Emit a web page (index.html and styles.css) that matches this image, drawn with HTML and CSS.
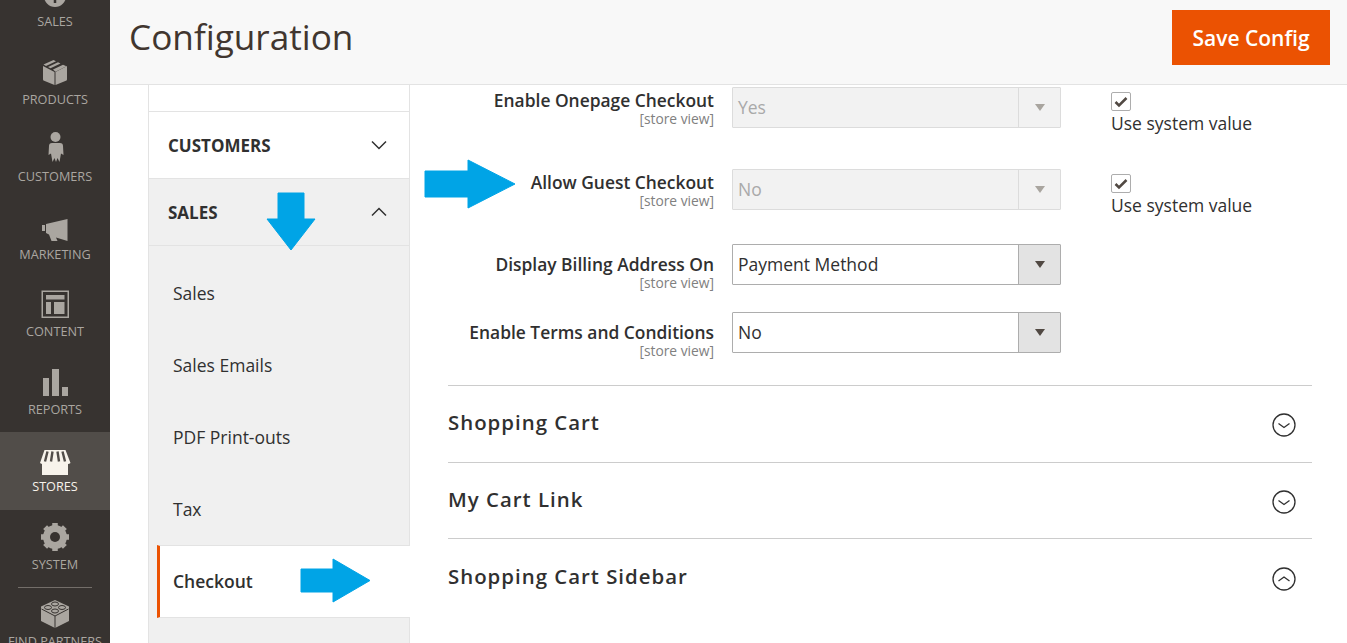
FILE: index.html
```html
<!DOCTYPE html>
<html lang="en">
<head>
    <meta charset="UTF-8">
    <meta name="viewport" content="width=device-width, initial-scale=1.0">
    <title>Configuration</title>
    <link rel="stylesheet" href="styles.css">
</head>
<body>
    <!-- Admin menu -->
    <nav class="admin-menu">
        <a class="menu-item" href="#">
            <svg class="menu-icon" viewBox="0 0 36 36"><circle cx="18" cy="21" r="11" fill="#aaa6a0"/><path d="M18 14v14" stroke="#373330" stroke-width="2.5"/></svg>
            <span>Sales</span>
        </a>
        <a class="menu-item" href="#">
            <svg class="menu-icon" viewBox="0 0 36 36"><path d="M6 13l11.500 6v13L6.500 27.500Q6 27 6 26zM18.500 19L30 13v13q0 1-.5 1.500L18.500 32z" fill="#aaa6a0"/><path d="M6.500 11.500L16.500 7 19 8.200 9 13zM11 14l10-4.800 2.500 1.200-10 4.800zM16 16.500l10-4.800 3.500 1.500-11 5.500z" fill="#aaa6a0"/></svg>
            <span>Products</span>
        </a>
        <a class="menu-item" href="#">
            <svg class="menu-icon" viewBox="0 0 36 36"><circle cx="18.500" cy="7" r="5" fill="#aaa6a0"/><path d="M14 13h9q3 0 3 3l.5 9-2.500-1.500-1.500 8.500-2-4-1.500 4-1.500-4-2 4-1.500-8.500-2.500 1.500.5-9q0-3 3-3z" fill="#aaa6a0"/></svg>
            <span>Customers</span>
        </a>
        <a class="menu-item" href="#">
            <svg class="menu-icon" viewBox="0 0 36 36"><path d="M5 17h3v6H5zM9 16l21.500-5v22L19 29.500 20.500 33h-6L12 26.500 9 25z" fill="#aaa6a0"/></svg>
            <span>Marketing</span>
        </a>
        <a class="menu-item" href="#">
            <svg class="menu-icon" viewBox="0 0 36 36"><path d="M4.500 5.500h27.500v27.500H4.500zM6 7v24.500h24.500V7z" fill="#aaa6a0" fill-rule="evenodd"/><path d="M9 10h18.500v4.500H9zM9 17h5v12H9zM17 17h10.500v12H17z" fill="#aaa6a0"/></svg>
            <span>Content</span>
        </a>
        <a class="menu-item" href="#">
            <svg class="menu-icon" viewBox="0 0 36 36"><path d="M6 15h6v18H6zM15 6h7v27h-7zM25 24h6v9h-6z" fill="#aaa6a0"/></svg>
            <span>Reports</span>
        </a>
        <a class="menu-item menu-item-active" href="#">
            <svg class="menu-icon" viewBox="0 0 36 36"><path d="M5 22q2 2 4 0h18q2 2 4 0v13H5z" fill="#f7f3eb"/><path d="M7.500 10h21l5 13q-2.500 2-5 0-2.500 2-5 0-2.500 2-5.500 0-2.500 2-5 0-2.500 2-5 0-2.500 2-5 0z" fill="#f7f3eb"/><path d="M10.500 11.500l-2.500 10M15.500 11.500l-1.500 10M20.500 11.500l1.500 10M25.500 11.500l2.500 10" stroke="#514d49" stroke-width="2.400" fill="none"/></svg>
            <span>Stores</span>
        </a>
        <a class="menu-item" href="#">
            <svg class="menu-icon" viewBox="0 0 36 36"><circle cx="18" cy="19" r="8.500" fill="none" stroke="#aaa6a0" stroke-width="7"/><path d="M18 5v28M4 19h28M8.100 9.100l19.800 19.800M27.900 9.100L8.100 28.900" stroke="#aaa6a0" stroke-width="5.500"/><circle cx="18" cy="19" r="5" fill="#373330"/></svg>
            <span>System</span>
        </a>
        <div class="menu-divider"></div>
        <a class="menu-item" href="#">
            <svg class="menu-icon" viewBox="0 0 36 36"><path d="M18 5l14 6.500v14.500L18 33 4 26V11.500z" fill="#aaa6a0"/><path d="M4.500 14l13.500 7 13.500-7M18 21v12" stroke="#373330" stroke-width="1" fill="none"/><ellipse cx="18" cy="9" rx="3.500" ry="2" fill="#aaa6a0" stroke="#373330"/><ellipse cx="11" cy="12.500" rx="3.500" ry="2" fill="#aaa6a0" stroke="#373330"/><ellipse cx="25" cy="12.500" rx="3.500" ry="2" fill="#aaa6a0" stroke="#373330"/><ellipse cx="18" cy="16" rx="3.500" ry="2" fill="#aaa6a0" stroke="#373330"/></svg>
            <span>Find Partners</span>
        </a>
    </nav>

    <div class="page">
        <header class="page-header">
            <h1>Configuration</h1>
            <button class="save-btn" type="button">Save Config</button>
        </header>

        <div class="page-body">
            <!-- Config tabs -->
            <div class="tabs">
                <div class="tabs-top"></div>
                <div class="tab-title">
                    <span>Customers</span>
                    <svg class="chevron" viewBox="0 0 16 10"><path d="M1 1.500l7 7 7-7" fill="none" stroke="#303030" stroke-width="1.500"/></svg>
                </div>
                <div class="tab-title tab-title-open">
                    <span>Sales</span>
                    <svg class="chevron" viewBox="0 0 16 10"><path d="M1 8.500l7-7 7 7" fill="none" stroke="#303030" stroke-width="1.500"/></svg>
                </div>
                <ul class="tab-items">
                    <li>Sales</li>
                    <li>Sales Emails</li>
                    <li>PDF Print-outs</li>
                    <li>Tax</li>
                    <li class="tab-item-active">Checkout</li>
                </ul>
            </div>

            <!-- Config form -->
            <div class="content">
                <div class="fields">
                    <div class="field field-first">
                        <div class="field-label">
                            <label>Enable Onepage Checkout</label>
                            <small>[store view]</small>
                        </div>
                        <div class="select select-disabled"><span>Yes</span><i class="select-handle"></i></div>
                        <div class="inherit">
                            <span class="checkbox"><svg viewBox="0 0 14 12"><path d="M1.500 6l3.500 3.500 7.500-7.500" fill="none" stroke="#514943" stroke-width="2.500"/></svg></span>
                            <span>Use system value</span>
                        </div>
                    </div>
                    <div class="field">
                        <div class="field-label">
                            <label>Allow Guest Checkout</label>
                            <small>[store view]</small>
                        </div>
                        <div class="select select-disabled"><span>No</span><i class="select-handle"></i></div>
                        <div class="inherit">
                            <span class="checkbox"><svg viewBox="0 0 14 12"><path d="M1.500 6l3.500 3.500 7.500-7.500" fill="none" stroke="#514943" stroke-width="2.500"/></svg></span>
                            <span>Use system value</span>
                        </div>
                    </div>
                    <div class="field field-low">
                        <div class="field-label">
                            <label>Display Billing Address On</label>
                            <small>[store view]</small>
                        </div>
                        <div class="select"><span>Payment Method</span><i class="select-handle"></i></div>
                    </div>
                    <div class="field field-low">
                        <div class="field-label">
                            <label>Enable Terms and Conditions</label>
                            <small>[store view]</small>
                        </div>
                        <div class="select"><span>No</span><i class="select-handle"></i></div>
                    </div>
                </div>

                <section class="section">
                    <h2>Shopping Cart</h2>
                    <svg class="section-icon" viewBox="0 0 24 24"><circle cx="12" cy="12" r="11" fill="none" stroke="#303030" stroke-width="1.300"/><path d="M6.500 10.500l5.500 4 5.500-4" fill="none" stroke="#303030" stroke-width="1.300"/></svg>
                </section>
                <section class="section">
                    <h2>My Cart Link</h2>
                    <svg class="section-icon" viewBox="0 0 24 24"><circle cx="12" cy="12" r="11" fill="none" stroke="#303030" stroke-width="1.300"/><path d="M6.500 10.500l5.500 4 5.500-4" fill="none" stroke="#303030" stroke-width="1.300"/></svg>
                </section>
                <section class="section">
                    <h2>Shopping Cart Sidebar</h2>
                    <svg class="section-icon" viewBox="0 0 24 24"><circle cx="12" cy="12" r="11" fill="none" stroke="#303030" stroke-width="1.300"/><path d="M6.500 14l5.500-4 5.500 4" fill="none" stroke="#303030" stroke-width="1.300"/></svg>
                </section>
            </div>
        </div>
    </div>

    <!-- Annotation arrows drawn over the screenshot -->
    <svg class="arrow arrow-guest" viewBox="0 0 92 50"><path d="M1 12h43V1l47 24-47 24V38H1z" fill="#00a4e6" stroke="#00a4e6" stroke-linejoin="round"/></svg>
    <svg class="arrow arrow-sales" viewBox="0 0 50 59"><path d="M12 1h26v26h11L25 58 1 27h11z" fill="#00a4e6" stroke="#00a4e6" stroke-linejoin="round"/></svg>
    <svg class="arrow arrow-checkout" viewBox="0 0 71 45"><path d="M1 11h32V1l37 21.500L33 44V34H1z" fill="#00a4e6" stroke="#00a4e6" stroke-linejoin="round"/></svg>
</body>
</html>
```

FILE: styles.css
```css
/* General */
html, body {
    height: 643px;
    overflow: hidden;
}

body {
    margin: 0;
    display: flex;
    background-color: #fff;
    color: #303030;
    font-family: 'Open Sans', 'Liberation Sans', sans-serif;
    font-size: 17.5px;
}

/* Admin menu */
.admin-menu {
    flex: 0 0 110px;
    width: 110px;
    min-width: 0;
    display: flex;
    flex-direction: column;
    margin-top: -33px;
    background-color: #373330;
}

.menu-item {
    flex: 0 0 77.5px;
    box-sizing: border-box;
    padding-top: 8px;
    display: flex;
    flex-direction: column;
    align-items: center;
    color: #aaa6a0;
    text-decoration: none;
    text-transform: uppercase;
    font-size: 12.7px;
    line-height: 20px;
    white-space: nowrap;
}

.menu-icon {
    flex: 0 0 36px;
    width: 36px;
    height: 36px;
}

.menu-item-active {
    background-color: #514d49;
    color: #f7f3eb;
}

.menu-divider {
    flex: 0 0 1px;
    margin: 0 18px -1px;
    background-color: #736e69;
}

/* Page */
.page {
    flex: 0 0 1237px;
    min-width: 0;
    display: flex;
    flex-direction: column;
}

.page-header {
    flex: 0 0 85px;
    box-sizing: border-box;
    display: flex;
    align-items: flex-start;
    justify-content: space-between;
    padding: 10px 17px 0 19px;
    background-color: #f8f8f8;
    border-bottom: 1px solid #e3e3e3;
}

.page-header h1 {
    margin: 0;
    font-size: 35.2px;
    font-weight: 400;
    line-height: 53px;
    color: #41362f;
}

.save-btn {
    width: 158px;
    height: 55px;
    border: 0;
    background-color: #eb5202;
    color: #fff;
    font-family: inherit;
    font-size: 21px;
    font-weight: 600;
}

.page-body {
    flex: 1;
    display: flex;
    margin-left: 38px;
    min-height: 0;
}

/* Config tabs */
.tabs {
    flex: 0 0 262px;
    box-sizing: border-box;
    display: flex;
    flex-direction: column;
    background-color: #f0f0f0;
    border-left: 1px solid #e3e3e3;
    border-right: 1px solid #e3e3e3;
}

.tabs-top {
    flex: 0 0 27px;
    box-sizing: border-box;
    background-color: #fff;
    border-bottom: 1px solid #e3e3e3;
}

.tab-title {
    flex: 0 0 67px;
    box-sizing: border-box;
    display: flex;
    align-items: center;
    justify-content: space-between;
    padding: 0 22px 0 19px;
    background-color: #fff;
    border-bottom: 1px solid #e3e3e3;
    font-weight: 700;
    font-size: 17px;
    text-transform: uppercase;
}

.tab-title-open {
    background-color: #f0f0f0;
}

.chevron {
    width: 16px;
    height: 10px;
}

.tab-items {
    list-style: none;
    margin: 0;
    padding: 11px 0 0;
}

.tab-items li {
    height: 72px;
    box-sizing: border-box;
    display: flex;
    align-items: center;
    padding-left: 24px;
}

.tab-items .tab-item-active {
    height: 73px;
    margin: 0 -1px 0 8px;
    padding: 0 0 1px 13px;
    background-color: #fff;
    border-left: 3px solid #eb5202;
    border-top: 1px solid #e3e3e3;
    border-bottom: 1px solid #e3e3e3;
    font-weight: 600;
}

/* Config form */
.content {
    flex: 0 0 864px;
    margin-left: 38px;
    padding-top: 2px;
}

.fields {
    padding-bottom: 5px;
}

.field {
    display: flex;
    align-items: flex-start;
    padding-bottom: 27px;
}

.field-first {
    padding-bottom: 34px;
}

.field-label {
    flex: 0 0 266px;
    margin-right: 18px;
    display: flex;
    flex-direction: column;
    align-items: flex-end;
    white-space: nowrap;
}

.field-low {
    padding-bottom: 23px;
}

.field-low .field-label {
    margin-top: 7px;
}

.field-label label {
    font-size: 17.4px;
    font-weight: 600;
    line-height: 26px;
}

.field-label small {
    font-size: 13.8px;
    line-height: 12px;
    color: #808080;
}

.select {
    flex: 0 0 329px;
    height: 41px;
    box-sizing: border-box;
    display: flex;
    align-items: center;
    justify-content: space-between;
    padding-left: 5px;
    background-color: #fff;
    border: 1px solid #adadad;
    border-radius: 1px;
}

.select span {
    margin-bottom: 2px;
}

.select-handle {
    position: relative;
    width: 42px;
    height: 100%;
    box-sizing: border-box;
    background-color: #e3e3e3;
    border-left: 1px solid #adadad;
}

.select-handle::after {
    content: "";
    position: absolute;
    left: 16px;
    top: 16px;
    border-top: 7px solid #514943;
    border-left: 5px solid transparent;
    border-right: 5px solid transparent;
}

.select-disabled {
    background-color: #f2f2f2;
    border-color: #dcdcdc;
    color: #a9a9a9;
}

.select-disabled .select-handle {
    background-color: #f2f2f2;
    border-left-color: #dcdcdc;
}

.select-disabled .select-handle::after {
    border-top-color: #a9a59f;
}

.inherit {
    margin-left: 50px;
    padding-top: 5px;
    height: 43px;
    display: flex;
    flex-direction: column;
    align-items: flex-start;
    line-height: 24px;
}

.checkbox {
    width: 20px;
    height: 20px;
    box-sizing: border-box;
    display: flex;
    align-items: center;
    justify-content: center;
    border: 1px solid #adadad;
    border-radius: 2px;
}

.checkbox svg {
    width: 14px;
    height: 12px;
}

/* Collapsible sections */
.section {
    height: 76.7px;
    box-sizing: border-box;
    display: flex;
    align-items: center;
    justify-content: space-between;
    padding-right: 16px;
    border-top: 1px solid #cccccc;
}

.section h2 {
    margin: 0 0 3px;
    font-size: 20.4px;
    font-weight: 600;
    letter-spacing: 1px;
    color: #303030;
}

.section-icon {
    width: 24px;
    height: 24px;
    margin-top: 3px;
}

/* Annotation arrows */
.arrow {
    position: absolute;
}

.arrow-guest {
    left: 424px;
    top: 159px;
    width: 92px;
    height: 50px;
}

.arrow-sales {
    left: 266px;
    top: 192px;
    width: 50px;
    height: 59px;
}

.arrow-checkout {
    left: 300px;
    top: 558px;
    width: 71px;
    height: 45px;
}
```
